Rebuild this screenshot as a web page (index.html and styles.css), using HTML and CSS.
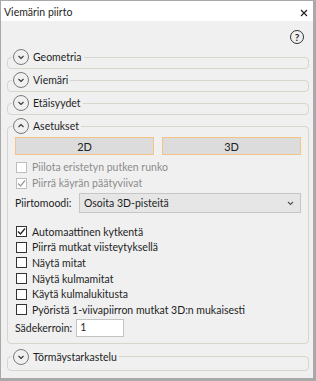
FILE: index.html
```html
<!DOCTYPE html>
<html lang="fi">
<head>
    <meta charset="UTF-8">
    <meta name="viewport" content="width=device-width, initial-scale=1.0">
    <link rel="stylesheet" href="styles.css">
</head>
<body>
    <div class="window">
        <div class="titlebar">
            <span class="title">Viemärin piirto</span>
            <svg class="close" width="8" height="8" viewBox="0 0 8 8">
                <path d="M1 1 L7 7 M7 1 L1 7" stroke="#222" stroke-width="1.2" fill="none"/>
            </svg>
        </div>

        <div class="content">
            <div class="help-row">
                <span class="help">?</span>
            </div>

            <fieldset class="group">
                <legend>
                    <span class="toggle">
                        <svg width="16" height="16" viewBox="0 0 16 16">
                            <circle cx="8" cy="8" r="7.5" stroke="#7a7a7a" fill="none"/>
                            <path d="M5.5 7 L8 9.5 L10.5 7" stroke="#333" stroke-width="1.1" fill="none"/>
                        </svg>
                        Geometria
                    </span>
                </legend>
            </fieldset>

            <fieldset class="group">
                <legend>
                    <span class="toggle">
                        <svg width="16" height="16" viewBox="0 0 16 16">
                            <circle cx="8" cy="8" r="7.5" stroke="#7a7a7a" fill="none"/>
                            <path d="M5.5 7 L8 9.5 L10.5 7" stroke="#333" stroke-width="1.1" fill="none"/>
                        </svg>
                        Viemäri
                    </span>
                </legend>
            </fieldset>

            <fieldset class="group">
                <legend>
                    <span class="toggle">
                        <svg width="16" height="16" viewBox="0 0 16 16">
                            <circle cx="8" cy="8" r="7.5" stroke="#7a7a7a" fill="none"/>
                            <path d="M5.5 7 L8 9.5 L10.5 7" stroke="#333" stroke-width="1.1" fill="none"/>
                        </svg>
                        Etäisyydet
                    </span>
                </legend>
            </fieldset>

            <fieldset class="group open">
                <legend>
                    <span class="toggle">
                        <svg width="16" height="16" viewBox="0 0 16 16">
                            <circle cx="8" cy="8" r="7.5" stroke="#7a7a7a" fill="none"/>
                            <path d="M5.5 9 L8 6.5 L10.5 9" stroke="#333" stroke-width="1.1" fill="none"/>
                        </svg>
                        Asetukset
                    </span>
                </legend>

                <div class="mode-buttons">
                    <button class="mode-btn">2D</button>
                    <button class="mode-btn">3D</button>
                </div>

                <div class="check disabled">
                    <span class="box"></span>
                    Piilota eristetyn putken runko
                </div>
                <div class="check disabled">
                    <span class="box">
                        <svg width="9" height="9" viewBox="0 0 9 9">
                            <path d="M1 4.5 L3.5 7 L8 1.5" stroke="#a0a0a0" stroke-width="1.3" fill="none"/>
                        </svg>
                    </span>
                    Piirrä käyrän päätyviivat
                </div>

                <div class="field-row">
                    <span class="field-label">Piirtomoodi:</span>
                    <div class="select">
                        <span>Osoita 3D-pisteitä</span>
                        <svg width="7" height="5" viewBox="0 0 7 5">
                            <path d="M1 1 L3.5 3.5 L6 1" stroke="#555" stroke-width="1.2" fill="none"/>
                        </svg>
                    </div>
                </div>

                <div class="check-list">
                    <div class="check">
                        <span class="box">
                            <svg width="9" height="9" viewBox="0 0 9 9">
                                <path d="M1 4.5 L3.5 7 L8 1.5" stroke="#222" stroke-width="1.3" fill="none"/>
                            </svg>
                        </span>
                        Automaattinen kytkentä
                    </div>
                    <div class="check"><span class="box"></span>Piirrä mutkat viisteytyksellä</div>
                    <div class="check"><span class="box"></span>Näytä mitat</div>
                    <div class="check"><span class="box"></span>Näytä kulmamitat</div>
                    <div class="check"><span class="box"></span>Käytä kulmalukitusta</div>
                    <div class="check"><span class="box"></span>Pyöristä 1-viivapiirron mutkat 3D:n mukaisesti</div>
                </div>

                <div class="radius-row">
                    <span class="field-label">Sädekerroin:</span>
                    <div class="text-input">1</div>
                </div>
            </fieldset>

            <fieldset class="group last">
                <legend>
                    <span class="toggle">
                        <svg width="16" height="16" viewBox="0 0 16 16">
                            <circle cx="8" cy="8" r="7.5" stroke="#7a7a7a" fill="none"/>
                            <path d="M5.5 7 L8 9.5 L10.5 7" stroke="#333" stroke-width="1.1" fill="none"/>
                        </svg>
                        Törmäystarkastelu
                    </span>
                </legend>
            </fieldset>
        </div>
    </div>
</body>
</html>
```

FILE: styles.css
```css
* {
    box-sizing: border-box;
}
body {
    margin: 0;
    font-family: Lato, "Open Sans", sans-serif;
    font-size: 10.5px;
    color: #1e1e1e;
    background-color: #f0f0f0;
}
.window {
    width: 316px;
    height: 381px;
    border-style: solid;
    border-color: #a9a9a9;
    border-width: 1px 3px 3px 1px;
    background-color: #f0f0f0;
    display: flex;
    flex-direction: column;
}
.titlebar {
    height: 20px;
    flex-shrink: 0;
    background-color: white;
    display: flex;
    align-items: center;
    justify-content: space-between;
    padding: 2px 5px 0 3px;
}
.close {
    margin-top: 1px;
}
.content {
    padding: 9px 4px 0 6px;
}
.help-row {
    display: flex;
    justify-content: flex-end;
    padding-right: 5px;
    margin-bottom: 5px;
}
.help {
    width: 14px;
    height: 14px;
    border: 1.5px solid #333;
    border-radius: 50%;
    display: flex;
    align-items: center;
    justify-content: center;
    font-size: 10px;
    font-weight: bold;
    line-height: 1;
    color: #222;
}
/* Collapsible groups */
.group {
    margin: 0 0 3px 0;
    padding: 0 7px 3px 7px;
    border: 1px solid #d6d6cc;
    border-radius: 4px;
    min-inline-size: 0;
}
.group legend {
    padding: 0 2px 0 1px;
    margin-left: -3px;
    height: 16px;
}
.toggle {
    display: flex;
    align-items: center;
    gap: 4px;
    height: 16px;
    line-height: 16px;
}
.group.open {
    padding-top: 3px;
    padding-bottom: 6px;
}
.group.last {
    margin-top: 5px;
    padding-bottom: 5px;
}
.mode-buttons {
    display: grid;
    grid-template-columns: 1fr 1fr;
    gap: 8px;
}
.mode-btn {
    height: 18px;
    background-color: #dcdcdc;
    border: 1px solid #f3c486;
    font-family: inherit;
    font-size: 11px;
    color: #222;
    padding: 0;
}
.check {
    display: flex;
    align-items: center;
    gap: 5px;
    height: 15.6px;
    padding-left: 1px;
    white-space: nowrap;
}
.check.disabled {
    height: 16px;
    color: #8c8c8c;
}
.mode-buttons + .check {
    margin-top: 4px;
}
.box {
    width: 11px;
    height: 11px;
    border: 1px solid #333;
    background-color: white;
    display: flex;
    align-items: center;
    justify-content: center;
    flex-shrink: 0;
}
.disabled .box {
    border-color: #bdbdbd;
}
.field-row {
    display: flex;
    align-items: center;
    margin-top: 2px;
}
.field-label {
    width: 64px;
}
.select {
    flex: 1;
    height: 20px;
    background-color: #e6e6e6;
    border: 1px solid #c6c6c6;
    display: flex;
    align-items: center;
    justify-content: space-between;
    padding: 0 6px 0 4px;
}
.check-list {
    margin-top: 11px;
}
.radius-row {
    display: flex;
    align-items: center;
    margin-top: 1px;
}
.radius-row .field-label {
    width: auto;
    margin-right: 4px;
}
.text-input {
    width: 48px;
    height: 18px;
    background-color: white;
    border: 1px solid #c3c3c3;
    padding: 0 3px;
    line-height: 14px;
}
```
